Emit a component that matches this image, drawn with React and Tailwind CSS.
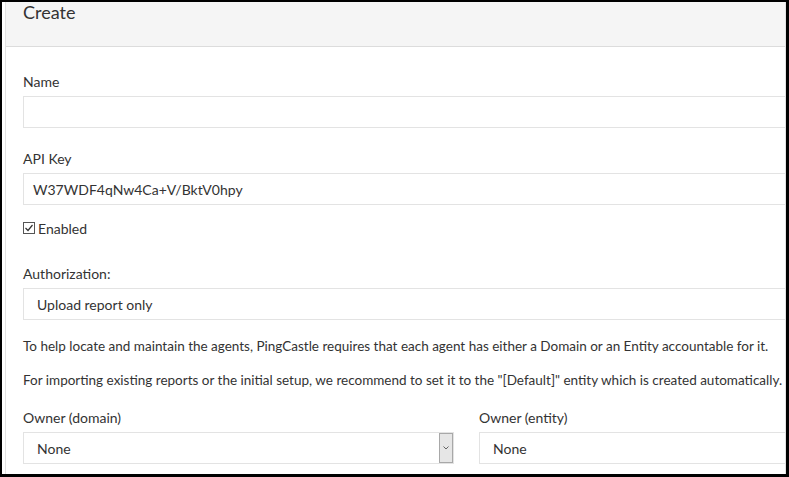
import React from "react";

function Field({ label, children, className = "" }) {
    return (
        <div className={className}>
            <div className="h-[21px] leading-[21px] text-[14px]">{label}</div>
            {children}
        </div>
    );
}

function Box({ children, className = "" }) {
    return (
        <div
            className={
                "h-[32px] border border-[#e3e3e3] flex items-center text-[14px] " +
                className
            }
        >
            {children}
        </div>
    );
}

export default function App() {
    return (
        <div
            className="w-[789px] h-[477px] overflow-hidden bg-white border-l-2 border-t-2 border-r-[3px] border-b-[3px] border-black text-[#333]"
            style={{ fontFamily: 'Lato, "Open Sans", sans-serif' }}
        >
            <div className="ml-[3px] h-full border-l border-r border-[#e2e2e2]">
                {/* panel heading */}
                <div className="h-[45px] bg-[#f5f5f5] border-b border-[#dcdcdc] pl-[17px]">
                    <div className="text-[18px] leading-[21px]">Create</div>
                </div>

                <div className="pl-[17px] pt-[24px] w-[900px]">
                    <Field label="Name">
                        <Box className="mt-[4px]" />
                    </Field>

                    <Field label="API Key" className="mt-[20px]">
                        <Box className="mt-[4px] pl-[9px]">W37WDF4qNw4Ca+V/BktV0hpy</Box>
                    </Field>

                    <label className="mt-[13px] flex items-center h-[20px] text-[14px]">
                        <span className="w-[12px] h-[12px] border border-[#555] flex items-center justify-center mr-[3px]">
                            <svg width="10" height="10" viewBox="0 0 10 10">
                                <path d="M1.5 5 L4 7.5 L8.5 2" fill="none" stroke="#333" strokeWidth="1.2" />
                            </svg>
                        </span>
                        Enabled
                    </label>

                    <Field label="Authorization:" className="mt-[25px]">
                        <Box className="mt-[4px] pl-[13px]">Upload report only</Box>
                    </Field>

                    <p className="mt-[16px] text-[13.5px] leading-[20px] whitespace-nowrap">
                        To help locate and maintain the agents, PingCastle requires that each agent has either a Domain or an Entity accountable for it.
                    </p>
                    <p className="mt-[14px] text-[13.5px] leading-[20px] whitespace-nowrap">
                        For importing existing reports or the initial setup, we recommend to set it to the "[Default]" entity which is created automatically.
                    </p>

                    <div className="mt-[17px] flex">
                        <Field label="Owner (domain)" className="w-[431px]">
                            <Box className="mt-[4px] pl-[13px] justify-between">
                                <span>None</span>
                                <span className="w-[14px] h-[30px] bg-[#e6e6e6] border border-[#a8a8a8] flex items-center justify-center">
                                    <svg width="8" height="6" viewBox="0 0 8 6">
                                        <path d="M1.5 1.5 L4 4 L6.5 1.5" fill="none" stroke="#555" strokeWidth="0.9" />
                                    </svg>
                                </span>
                            </Box>
                        </Field>
                        <Field label="Owner (entity)" className="ml-[25px] flex-1">
                            <Box className="mt-[4px] pl-[13px]">None</Box>
                        </Field>
                    </div>
                </div>
            </div>
        </div>
    );
}
